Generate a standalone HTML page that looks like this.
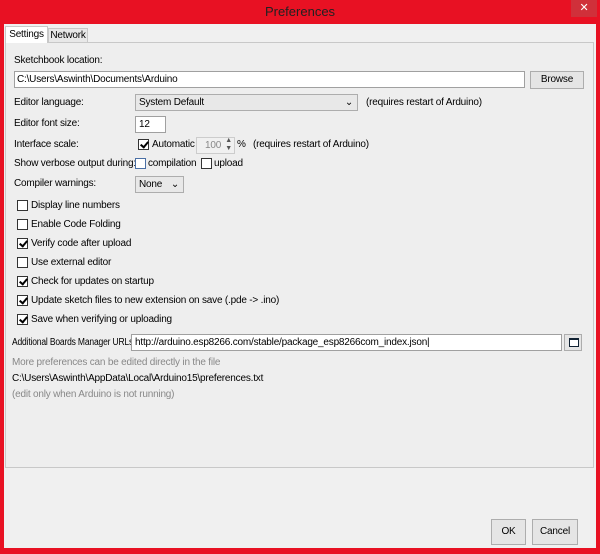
<!DOCTYPE html>
<html><head><style>
*{box-sizing:border-box;margin:0;padding:0}
body{width:600px;height:554px;background:#e81123;position:relative;overflow:hidden;font-family:"Liberation Sans",sans-serif;font-size:10px;letter-spacing:-0.2px;color:#000}
.a{position:absolute;white-space:nowrap}
.t{position:absolute;white-space:nowrap;line-height:12px}
.cb{position:absolute;width:11px;height:11px;border:1px solid #333;background:#fff}
.cb.on::after{content:"";position:absolute;left:3px;top:0px;width:3px;height:6px;border:solid #000;border-width:0 2px 2px 0;transform:rotate(40deg)}
.in{position:absolute;background:#fff;border:1px solid #a0a0a0}
.btn{position:absolute;background:#e5e5e5;border:1px solid #adadad;text-align:center}
</style></head><body>
<div class="a" style="left:0;top:0;width:600px;height:24px;text-align:center;line-height:24px;font-size:13px;letter-spacing:0;color:#222">Preferences</div>
<div class="a" style="left:571px;top:0;width:26px;height:17px;background:#d0303a;color:#fff;text-align:center;line-height:16px;font-size:11px">✕</div>
<div class="a" style="left:4px;top:24px;width:592px;height:524px;background:#f0f0f0"></div>
<div class="a" style="left:5px;top:42px;width:589px;height:426px;border:1px solid #c8c8c8;background:#eee"></div>
<div class="a" style="left:5px;top:26px;width:43px;height:17px;background:#fff;border:1px solid #c8c8c8;border-bottom:none;text-align:center;line-height:15px">Settings</div>
<div class="a" style="left:48px;top:28px;width:40px;height:14px;background:#e8e8e8;border:1px solid #c8c8c8;border-bottom:none;text-align:center;line-height:13px">Network</div>

<div class="t" style="left:14px;top:55px">Sketchbook location:</div>
<div class="in" style="left:14px;top:71px;width:511px;height:17px;padding-left:2px;line-height:15px">C:\Users\Aswinth\Documents\Arduino</div>
<div class="btn" style="left:530px;top:71px;width:54px;height:18px;line-height:16px">Browse</div>

<div class="t" style="left:14px;top:97px">Editor language:</div>
<div class="a" style="left:135px;top:94px;width:223px;height:17px;border:1px solid #adadad;background:#e8e8e8;padding-left:3px;line-height:15px">System Default<span style="position:absolute;right:4px;top:0">⌄</span></div>
<div class="t" style="left:366px;top:97px">(requires restart of Arduino)</div>

<div class="t" style="left:14px;top:118px">Editor font size:</div>
<div class="in" style="left:135px;top:116px;width:31px;height:17px;padding-left:3px;line-height:15px">12</div>

<div class="t" style="left:14px;top:139px">Interface scale:</div>
<div class="cb on" style="left:138px;top:139px"></div>
<div class="t" style="left:152px;top:139px">Automatic</div>
<div class="a" style="left:196px;top:137px;width:39px;height:17px;border:1px solid #ccc;background:#f0f0f0;color:#888;padding-left:8px;line-height:15px">100<span style="position:absolute;right:2px;top:-1px;font-size:7px;line-height:8px;color:#555">▲<br>▼</span></div>
<div class="t" style="left:237px;top:139px">%</div>
<div class="t" style="left:253px;top:139px">(requires restart of Arduino)</div>

<div class="t" style="left:14px;top:158px">Show verbose output during:</div>
<div class="cb" style="left:135px;top:158px;border-color:#4a6fa5"></div>
<div class="t" style="left:148px;top:158px">compilation</div>
<div class="cb" style="left:201px;top:158px"></div>
<div class="t" style="left:214px;top:158px">upload</div>

<div class="t" style="left:14px;top:178px">Compiler warnings:</div>
<div class="a" style="left:135px;top:176px;width:49px;height:17px;border:1px solid #adadad;background:#e8e8e8;padding-left:3px;line-height:15px">None<span style="position:absolute;right:4px;top:0">⌄</span></div>

<div class="cb" style="left:17px;top:200px"></div><div class="t" style="left:31px;top:200px">Display line numbers</div>
<div class="cb" style="left:17px;top:219px"></div><div class="t" style="left:31px;top:219px">Enable Code Folding</div>
<div class="cb on" style="left:17px;top:238px"></div><div class="t" style="left:31px;top:238px">Verify code after upload</div>
<div class="cb" style="left:17px;top:257px"></div><div class="t" style="left:31px;top:257px">Use external editor</div>
<div class="cb on" style="left:17px;top:276px"></div><div class="t" style="left:31px;top:276px">Check for updates on startup</div>
<div class="cb on" style="left:17px;top:295px"></div><div class="t" style="left:31px;top:295px">Update sketch files to new extension on save (.pde -&gt; .ino)</div>
<div class="cb on" style="left:17px;top:314px"></div><div class="t" style="left:31px;top:314px">Save when verifying or uploading</div>

<div class="t" style="left:12px;top:337px;transform:scaleX(0.85);transform-origin:left center">Additional Boards Manager URLs:</div>
<div class="in" style="left:131px;top:334px;width:431px;height:17px;padding-left:3px;line-height:15px">http://arduino.esp8266.com/stable/package_esp8266com_index.json|</div>
<div class="a" style="left:564px;top:334px;width:18px;height:17px;border:1px solid #adadad;background:#e5e5e5"><div style="position:absolute;left:4px;top:3px;width:10px;height:9px;border:1px solid #123;border-top-width:2px;background:#fff"></div></div>

<div class="t" style="left:12px;top:357px;color:#888">More preferences can be edited directly in the file</div>
<div class="t" style="left:12px;top:373px">C:\Users\Aswinth\AppData\Local\Arduino15\preferences.txt</div>
<div class="t" style="left:12px;top:389px;color:#888">(edit only when Arduino is not running)</div>

<div class="btn" style="left:491px;top:519px;width:35px;height:26px;line-height:24px">OK</div>
<div class="btn" style="left:532px;top:519px;width:46px;height:26px;line-height:24px">Cancel</div>
</body></html>
